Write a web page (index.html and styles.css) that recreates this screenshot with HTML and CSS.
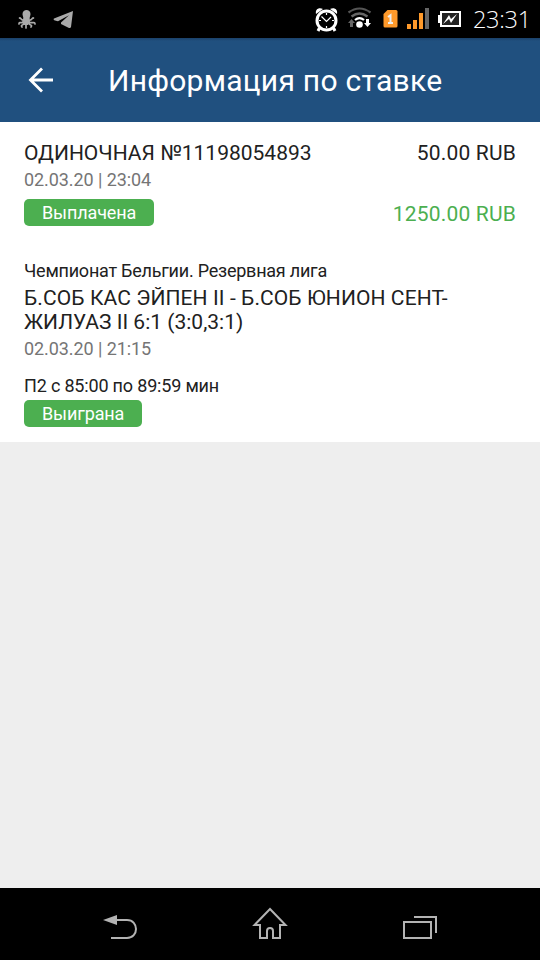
FILE: index.html
```html
<!DOCTYPE html>
<html lang="ru">
<head>
<meta charset="utf-8">
<title>Информация по ставке</title>
<link rel="stylesheet" href="styles.css">
</head>
<body>
<div class="statusbar">
  <svg class="notifications" width="80" height="38" viewBox="0 0 80 38">
    <g fill="#aaa">
      <path d="M22.500 14c0-5.500 8-5.500 8 0 0 2-1 3-1 5h-6c0-2-1-3-1-5z"/>
      <path d="M24 17h5l1 5-2 3h-4l-2-3z"/>
    </g>
    <g fill="none" stroke="#aaa" stroke-width="1.700" stroke-linecap="round">
      <path d="M24 20c-3 1-3.500-3-4.500-2M29 20c3 1 3.500-3 4.500-2M24 22c-3 2-5-1-5 2M29 22c3 2 6-1 6 2M24 23c0 3-4 1-2 4M29 23c0 3 4 1 2 4M26 24v4"/>
    </g>
    <path d="M73 11L54 18.500c-1 .8 0 1.700 1 2l3 .8 11-6-8 7.200 0 1.500 8 4c1 .3 1.700 0 2-1z" fill="#aaa"/>
  </svg>
  <div class="system">
    <svg width="153" height="38" viewBox="312 0 153 38">
      <circle cx="326.500" cy="20.500" r="9.500" fill="none" stroke="#fff" stroke-width="3"/>
      <path d="M316 14c-1-5 3-7 7-5zM330 9c4-2 8 0 7 5z" fill="#fff"/>
      <path d="M319.500 28l-1.500 3M333.500 28l1.500 3" stroke="#fff" stroke-width="3"/>
      <path d="M321.500 16.500l5 5 4.500-4.500M326.500 13v2M326.500 26v2M319 20.500h2M332 20.500h2" fill="none" stroke="#fff" stroke-width="1.200"/>
      <g fill="none" stroke-width="2.200">
        <path d="M348.500 12.500q11-8 22 0" stroke="#555"/>
        <path d="M351.500 16.500q8-6 16 0" stroke="#666"/>
        <path d="M355 20q4.500-3.800 9 0" stroke="#fff"/>
      </g>
      <circle cx="359.500" cy="24.500" r="3.300" fill="#fff"/>
      <path d="M351.500 19l3.500 4h-2v4h-3v-4h-2z" fill="#666"/>
      <path d="M366 19h3v4h2l-3.500 4-3.500-4h2z" fill="#fff"/>
      <path d="M387.500 10h8.500q1.500 0 1.500 1.500V26q0 1.500-1.500 1.500h-11q-1.500 0-1.500-1.500V14z" fill="#ff9a2b"/>
      <path d="M388 17l2.500-1.800V23M388 23h5" fill="none" stroke="#eee" stroke-width="2"/>
      <path d="M407 24h4v5h-4zM413 20h4v9h-4zM419 13h4v16h-4z" fill="#ff9a2b"/>
      <path d="M425 8h4v21h-4z" fill="#666"/>
      <rect x="441" y="12" width="19" height="14" fill="#222" stroke="#fff" stroke-width="2"/>
      <path d="M438 15h2v8h-2z" fill="#fff"/>
      <path d="M443 24l6-9 2 4 6-5-6 9-2-4z" fill="#fff"/>
    </svg>
    <span class="clock">23:31</span>
  </div>
</div>
<header class="appbar">
  <svg class="back" width="26" height="26" viewBox="0 0 26 26"><path d="M14 1.500L2.500 13 14 24.500M2.500 13H25" fill="none" stroke="#fff" stroke-width="2.800"/></svg>
  <h1>Информация по ставке</h1>
</header>
<main class="content">
  <section class="ticket">
    <div class="row large"><span class="number">ОДИНОЧНАЯ №11198054893</span><span class="stake">50.00 RUB</span></div>
    <div class="date"><span>02.03.20 | 23:04</span></div>
    <div class="row payout"><span class="badge paid">Выплачена</span><span class="win">1250.00 RUB</span></div>
    <div class="league"><span>Чемпионат Бельгии. Резервная лига</span></div>
    <div class="teams"><span class="line1">Б.СОБ КАС ЭЙПЕН II - Б.СОБ ЮНИОН СЕНТ-</span><br><span class="line2">ЖИЛУАЗ II 6:1 (3:0,3:1)</span></div>
    <div class="date"><span>02.03.20 | 21:15</span></div>
    <div class="market"><span>П2 с 85:00 по 89:59 мин</span></div>
    <span class="badge won">Выиграна</span>
  </section>
</main>
<nav class="navbar">
  <svg width="540" height="72" viewBox="0 888 540 72">
    <path d="M103 920l14-5v10z" fill="#b3b3b3"/>
    <g fill="none" stroke="#b3b3b3" stroke-width="2">
      <path d="M116 920h11c12 0 12 18 0 18h-16"/>
      <path d="M270 909l-15.500 16h5.500v13h7v-7c0-4 6-4 6 0v7h7v-13h5.500z"/>
      <path d="M404 922h27v16h-27zM414 917h22v16"/>
    </g>
  </svg>
</nav>
</body>
</html>
```
FILE: styles.css
```css
* { box-sizing: border-box; }
body {
  margin: 0;
  height: 960px;
  display: flex;
  flex-direction: column;
  background: #eee;
  color: #212121;
  font-family: Roboto, "Liberation Sans", sans-serif;
  font-size: 18px;
  overflow: hidden;
}
svg { display: block; flex: none; }
.statusbar {
  height: 38px;
  background: #000;
  display: flex;
  justify-content: space-between;
}
.system { display: flex; padding-right: 9px; }
.clock {
  width: 58px;
  margin-left: 8px;
  color: #fff;
  font: 300 23.500px/39px "Open Sans", "Noto Sans", sans-serif;
  letter-spacing: -0.3px;
  white-space: nowrap;
}
.appbar {
  height: 84px;
  display: flex;
  align-items: center;
  padding-left: 28px;
  background: linear-gradient(#1b416a, #20507f 3px, #20507f);
  color: #fff;
}
.back { margin-top: -1px; }
.appbar h1 {
  margin: 1px 0 0 54px;
  font-size: 30px;
  font-weight: 400;
  line-height: 36px;
  letter-spacing: 0.26px;
  white-space: nowrap;
}
.content { flex: 1; }
.ticket {
  height: 320px;
  padding: 19px 24px 0;
  background: #fff;
}
.row { display: flex; justify-content: space-between; }
.large { font-size: 21px; line-height: 25px; }
.date { margin-top: 3px; line-height: 22px; letter-spacing: -0.08px; color: #757575; }
.payout { margin-top: 8px; height: 27px; }
.badge {
  display: inline-block;
  height: 27px;
  padding: 0 18px;
  border-radius: 5px;
  background: #4caf50;
  color: #fff;
  line-height: 27px;
  letter-spacing: -0.12px;
  white-space: nowrap;
}
.paid { width: 130px; }
.won { width: 118px; }
.stake { letter-spacing: 0.18px; }
.win { font-size: 21px; line-height: 31px; letter-spacing: 0.18px; color: #4caf50; }
.league { margin-top: 34px; line-height: 22px; letter-spacing: -0.23px; }
.teams { margin-top: 4px; font-size: 21px; line-height: 24px; white-space: nowrap; }
.line1 { letter-spacing: 0.09px; }
.teams + .date { margin-top: 4px; }
.market { margin-top: 15px; margin-bottom: 3px; line-height: 22px; letter-spacing: -0.18px; }
.navbar { height: 72px; background: #000; }
```
